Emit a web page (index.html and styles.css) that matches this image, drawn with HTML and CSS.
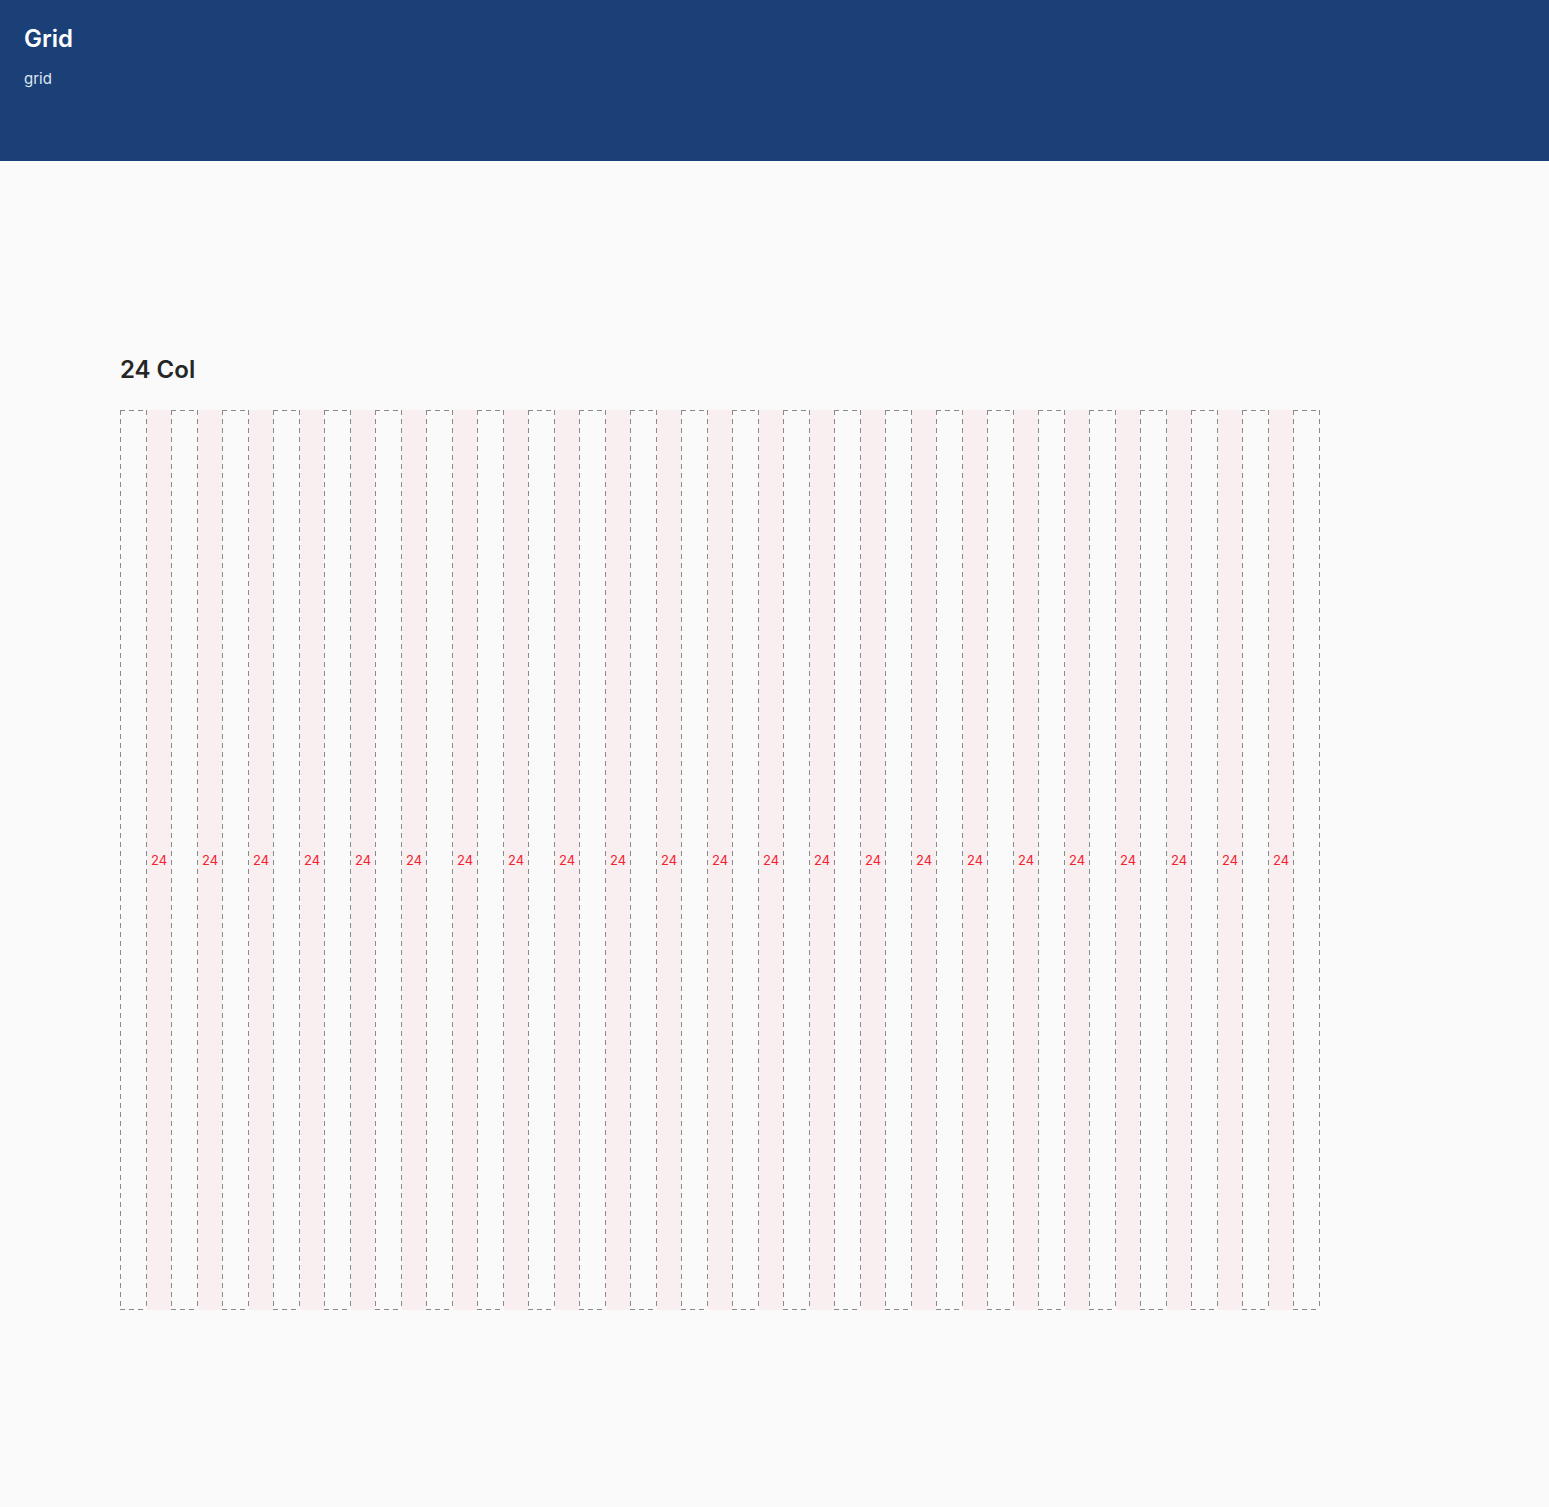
FILE: index.html
```html
<!DOCTYPE html>
<html lang="en">
<head>
  <meta charset="UTF-8" />
  <title>Grid</title>
  <link rel="stylesheet" href="styles.css">
</head>
<body>
  <div class="header">
    <div class="header-title">Grid</div>
    <div class="header-sub">grid</div>
  </div>

  <div class="content">
    <h2 class="section-title">24 Col</h2>
    <div class="grid" id="grid"></div>
  </div>

  <script src="grid.js"></script>
</body>
</html>
```

FILE: grid.js
```js
const grid = document.getElementById("grid");
const cols = 24;
const gutter = 24;

for (let i = 0; i < cols; i++) {
  const col = document.createElement("div");
  col.className = "col";
  grid.appendChild(col);

  if (i < cols - 1) {
    const gap = document.createElement("div");
    gap.className = "gutter";
    gap.textContent = gutter;
    grid.appendChild(gap);
  }
}
```

FILE: styles.css
```css
body {
  margin: 0;
  font-family: Inter, "Noto Sans", sans-serif;
  background-color: #fafafa;
}

.header {
  background-color: #1b4077;
  height: 161px;
  padding: 24px 24px 0;
  box-sizing: border-box;
  color: #fff;
}

.header-title {
  font-size: 24px;
  font-weight: 600;
  line-height: 30px;
}

.header-sub {
  margin-top: 15px;
  font-size: 15px;
  color: #dfe6f0;
}

.content {
  padding: 192px 120px 0;
}

.section-title {
  margin: 0 0 23px;
  font-size: 24px;
  font-weight: 600;
  line-height: 34px;
  color: #262626;
}

.grid {
  display: flex;
  width: 1200px;
  height: 900px;
}

.col {
  width: 27px;
  background:
    repeating-linear-gradient(to bottom, #8a8a8a 0 5px, transparent 5px 9px) left top / 1px 100% no-repeat,
    repeating-linear-gradient(to bottom, #8a8a8a 0 5px, transparent 5px 9px) right top / 1px 100% no-repeat,
    repeating-linear-gradient(to right, #8a8a8a 0 5px, transparent 5px 9px) left top / 100% 1px no-repeat,
    repeating-linear-gradient(to right, #8a8a8a 0 5px, transparent 5px 9px) left bottom / 100% 1px no-repeat;
}

.gutter {
  width: 24px;
  background-color: #f9eef0;
  color: #f5222d;
  font-size: 13px;
  display: flex;
  align-items: center;
  justify-content: center;
}
```
